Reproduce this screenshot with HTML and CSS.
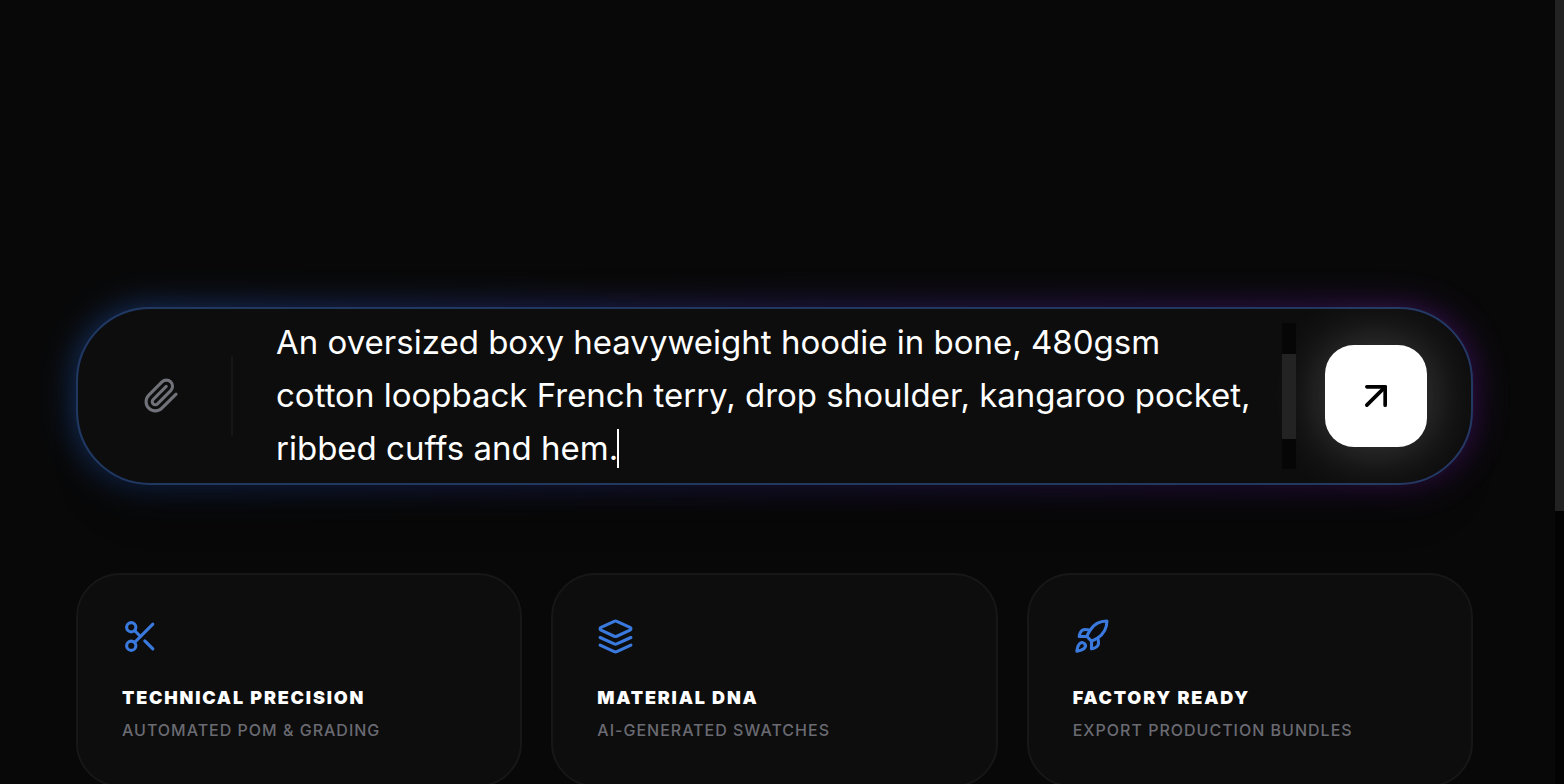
FILE: index.html
```html
<!DOCTYPE html>
<html lang="en">
<head>
<meta charset="utf-8">
<meta name="viewport" content="width=device-width, initial-scale=1">
<title>Design prompt</title>
<link rel="stylesheet" href="styles.css">
</head>
<body>
<div class="page">
  <main class="main">
    <form class="prompt">
      <button class="attach" type="button" aria-label="Attach file">
        <svg class="icon" viewBox="0 0 24 24"><path d="m21.44 11.05-9.19 9.19a6 6 0 0 1-8.49-8.49l8.57-8.57A4 4 0 1 1 18 8.84l-8.59 8.57a2 2 0 0 1-2.83-2.83l8.49-8.48"/></svg>
      </button>
      <div class="field">
        <textarea class="input" rows="3" aria-label="Describe your garment" spellcheck="false">An oversized boxy heavyweight hoodie in bone, 480gsm cotton loopback French terry, drop shoulder, kangaroo pocket, ribbed cuffs and hem.</textarea>
        <span class="caret"></span>
      </div>
      <div class="scroll"><div class="scroll-thumb"></div></div>
      <button class="send" type="submit" aria-label="Generate">
        <svg class="icon icon-send" viewBox="0 0 24 24"><path d="M7 7h10v10"/><path d="M7 17 17 7"/></svg>
      </button>
    </form>
    <section class="cards">
      <article class="card">
        <svg class="icon icon-card" viewBox="0 0 24 24"><circle cx="6" cy="6" r="3"/><path d="M8.12 8.12 12 12"/><path d="M20 4 8.12 15.88"/><circle cx="6" cy="18" r="3"/><path d="M14.8 14.8 20 20"/></svg>
        <h2 class="title">TECHNICAL PRECISION</h2>
        <p class="note">AUTOMATED POM &amp; GRADING</p>
      </article>
      <article class="card">
        <svg class="icon icon-card" viewBox="0 0 24 24"><path d="m12.83 2.18a2 2 0 0 0-1.66 0L2.6 6.08a1 1 0 0 0 0 1.83l8.58 3.91a2 2 0 0 0 1.66 0l8.58-3.9a1 1 0 0 0 0-1.83Z"/><path d="m22 17.65-9.17 4.16a2 2 0 0 1-1.66 0L2 17.65"/><path d="m22 12.65-9.17 4.16a2 2 0 0 1-1.66 0L2 12.65"/></svg>
        <h2 class="title">MATERIAL DNA</h2>
        <p class="note">AI-GENERATED SWATCHES</p>
      </article>
      <article class="card">
        <svg class="icon icon-card" viewBox="0 0 24 24"><path d="M4.5 16.5c-1.5 1.26-2 5-2 5s3.74-.5 5-2c.71-.84.7-2.13-.09-2.91a2.18 2.18 0 0 0-2.91-.09z"/><path d="m12 15-3-3a22 22 0 0 1 2-3.95A12.88 12.88 0 0 1 22 2c0 2.72-.78 7.5-6 11a22.35 22.35 0 0 1-4 2z"/><path d="M9 12H4s.55-3.03 2-4c1.62-1.08 5 0 5 0"/><path d="M12 15v5s3.03-.55 4-2c1.08-1.62 0-5 0-5"/></svg>
        <h2 class="title">FACTORY READY</h2>
        <p class="note">EXPORT PRODUCTION BUNDLES</p>
      </article>
    </section>
  </main>
  <div class="rail"><div class="rail-thumb"></div></div>
</div>
</body>
</html>
```
FILE: styles.css
```css
* {
  box-sizing: border-box;
}

body {
  margin: 0;
  background: #080808;
  color: #fff;
  font-family: Inter, "Liberation Sans", sans-serif;
  overflow: hidden;
}

.page {
  display: flex;
  height: 100vh;
}

.main {
  flex: 1;
  min-width: 0;
  padding: 307px 82px 0 76px;
}

.rail {
  width: 9px;
  background: #030303;
}

.rail-thumb {
  height: 65.2%;
  background: #222;
}

.icon {
  display: block;
  width: 37px;
  height: 37px;
  fill: none;
  stroke: currentColor;
  stroke-width: 2;
  stroke-linecap: round;
  stroke-linejoin: round;
}

.prompt {
  position: relative;
  display: flex;
  align-items: center;
  padding: 7px 44px 8px 45px;
  border: 2px solid #213861;
  border-radius: 74px;
  background: #0d0d0d;
  background-clip: padding-box;
  box-shadow: 0 44px 44px -22px rgba(0, 0, 0, 0.3);
}

.prompt::before {
  content: "";
  position: absolute;
  inset: -4px;
  z-index: -1;
  border-radius: 76px;
  background: linear-gradient(90deg, #1c4c9c, #33267c 50%, #52127c);
  filter: blur(16px);
  opacity: 0.6;
}

.attach {
  flex: none;
  display: grid;
  place-items: center;
  width: 110px;
  height: 80px;
  padding: 0 32px 0 0;
  border: 0;
  border-right: 2px solid #171717;
  background: none;
  color: #71717a;
}

.field {
  position: relative;
  flex: 1;
  min-width: 0;
  margin-left: 43px;
}

.input {
  display: block;
  width: 100%;
  padding: 0;
  border: 0;
  outline: 0;
  resize: none;
  overflow: hidden;
  background: none;
  color: #fff;
  font-family: inherit;
  font-size: 33px;
  font-weight: 400;
  line-height: 53px;
}

.caret {
  position: absolute;
  left: 341px;
  bottom: 7px;
  width: 2px;
  height: 39px;
  background: #fff;
}

.scroll {
  position: relative;
  z-index: 1;
  width: 14px;
  height: 146px;
  margin: 0 29px;
  padding: 31px 0 30px;
  background: #060606;
}

.scroll-thumb {
  height: 100%;
  background: #232323;
}

.send {
  flex: none;
  display: grid;
  place-items: center;
  width: 102px;
  height: 102px;
  padding: 0;
  border: 0;
  border-radius: 29px;
  background: #fff;
  color: #000;
  box-shadow: 0 0 56px rgba(255, 255, 255, 0.24);
}

.icon-send {
  width: 44px;
  height: 44px;
}

.cards {
  display: grid;
  grid-template-columns: repeat(3, 1fr);
  gap: 29px;
  margin-top: 88px;
}

.card {
  padding: 43px 44px;
  border: 2px solid #171717;
  border-radius: 44px;
  background: #0d0d0d;
}

.icon-card {
  color: #3a7ade;
}

.title {
  margin: 30px 0 0;
  font-size: 18px;
  line-height: 26px;
  font-weight: 900;
  letter-spacing: 0.1em;
}

.note {
  margin: 7px 0 0;
  color: #6a6a72;
  font-size: 16px;
  line-height: 24px;
  font-weight: 500;
  letter-spacing: 1px;
}
```
